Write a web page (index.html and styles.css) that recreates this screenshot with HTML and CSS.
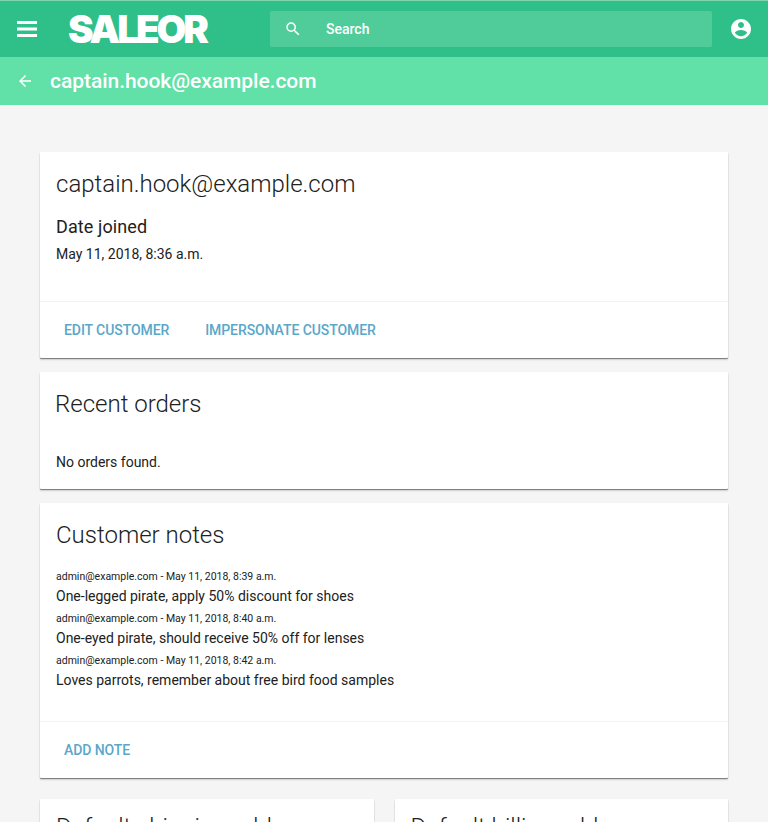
FILE: index.html
```html
<!DOCTYPE html>
<html lang="en">

<head>
	<meta charset="UTF-8">
	<title>captain.hook@example.com</title>
	<link rel="stylesheet" href="styles.css">
</head>

<body>
	<div class="page">
		<header class="topbar">
			<svg class="menu-icon" width="24" height="24" viewBox="0 0 24 24"><path d="M2 4h20v3H2zM2 10.5h20v3H2zM2 17h20v3H2z" fill="#fff"/></svg>
			<span class="logo">SALEOR</span>
			<div class="search">
				<svg width="18" height="18" viewBox="0 0 24 24"><path d="M15.5 14h-.79l-.28-.27A6.471 6.471 0 0 0 16 9.5 6.5 6.5 0 1 0 9.5 16c1.61 0 3.09-.59 4.23-1.57l.27.28v.79l5 4.99L20.49 19l-4.99-5zm-6 0C7.01 14 5 11.99 5 9.5S7.01 5 9.5 5 14 7.01 14 9.5 11.99 14 9.5 14z" fill="#fff"/></svg>
				<span class="search-label">Search</span>
			</div>
			<svg class="account-icon" width="24" height="24" viewBox="0 0 24 24"><path d="M12 2C6.48 2 2 6.48 2 12s4.48 10 10 10 10-4.48 10-10S17.52 2 12 2zm0 3c1.66 0 3 1.34 3 3s-1.34 3-3 3-3-1.34-3-3 1.34-3 3-3zm0 14.2c-2.5 0-4.71-1.28-6-3.22.03-1.99 4-3.08 6-3.08 1.99 0 5.97 1.09 6 3.08-1.29 1.94-3.5 3.22-6 3.22z" fill="#fff"/></svg>
		</header>
		<div class="subbar">
			<svg width="18" height="18" viewBox="0 0 24 24"><path d="M20 11H7.8l5.6-5.6L12 4l-8 8 8 8 1.4-1.4L7.8 13H20z" fill="#fff"/></svg>
			<h1>captain.hook@example.com</h1>
		</div>
		<main class="content">
			<section class="card card-customer">
				<div class="card-body">
					<h2 class="card-title">captain.hook@example.com</h2>
					<h3 class="label">Date joined</h3>
					<p class="text">May 11, 2018, 8:36 a.m.</p>
				</div>
				<div class="card-actions">
					<a class="action">Edit customer</a>
					<a class="action">Impersonate customer</a>
				</div>
			</section>
			<section class="card card-orders">
				<h2 class="card-title">Recent orders</h2>
				<p class="text">No orders found.</p>
			</section>
			<section class="card card-notes">
				<div class="card-body">
					<h2 class="card-title">Customer notes</h2>
					<div class="note">
						<small>admin@example.com - May 11, 2018, 8:39 a.m.</small>
						<p class="text">One-legged pirate, apply 50% discount for shoes</p>
					</div>
					<div class="note">
						<small>admin@example.com - May 11, 2018, 8:40 a.m.</small>
						<p class="text">One-eyed pirate, should receive 50% off for lenses</p>
					</div>
					<div class="note">
						<small>admin@example.com - May 11, 2018, 8:42 a.m.</small>
						<p class="text">Loves parrots, remember about free bird food samples</p>
					</div>
				</div>
				<div class="card-actions">
					<a class="action">Add note</a>
				</div>
			</section>
			<div class="address-row">
				<section class="card card-address">
					<h2 class="card-title">Default shipping address</h2>
				</section>
				<section class="card card-address">
					<h2 class="card-title">Default billing address</h2>
				</section>
			</div>
		</main>
	</div>
</body>

</html>
```

FILE: styles.css
```css
html,
body {
	height: 100%;
	margin: 0;
	overflow: hidden;
	background-color: #fff;
}

body {
	font-family: Roboto, sans-serif;
	color: #212121;
}

h1,
h2,
h3,
p {
	margin: 0;
}

.page {
	width: 768px;
	height: 822px;
	overflow: hidden;
	background-color: #f5f5f5;
}

.topbar {
	display: flex;
	align-items: center;
	height: 56px;
	border-top: 1px solid #7fd6ad;
	background-color: #2fc08a;
}

.menu-icon {
	margin-left: 15px;
	flex-shrink: 0;
}

.logo {
	width: 202px;
	margin-left: 29px;
	font-family: Inter, sans-serif;
	font-size: 38.5px;
	font-weight: 900;
	letter-spacing: -3px;
	color: #fff;
	flex-shrink: 0;
}

.search {
	display: flex;
	align-items: center;
	width: 442px;
	height: 36px;
	margin-right: 17px;
	padding-left: 14px;
	box-sizing: border-box;
	border-radius: 2px;
	background-color: #50cc9b;
	color: #fff;
	flex-shrink: 0;
}

.search-label {
	margin-left: 24px;
	font-size: 14px;
	font-weight: 500;
}

.account-icon {
	flex-shrink: 0;
}

.subbar {
	display: flex;
	align-items: center;
	height: 48px;
	padding-left: 16px;
	background-color: #61e0a8;
	color: #fff;
}

.subbar h1 {
	margin-left: 16px;
	font-size: 21px;
	font-weight: 500;
	letter-spacing: -0.04px;
}

.content {
	display: flex;
	flex-direction: column;
	gap: 14px;
	padding: 47px 40px 0;
}

.card {
	border-radius: 1px;
	background-color: #fff;
	box-shadow: 0 1px 1px rgba(0, 0, 0, 0.45), 0 2px 2px rgba(0, 0, 0, 0.12);
}

.card-title {
	font-size: 24px;
	font-weight: 300;
	line-height: 32px;
}

.card-customer .card-body {
	height: 150px;
	padding: 16px 16px 0;
	box-sizing: border-box;
	border-bottom: 1px solid #f2f2f2;
}

.label {
	margin-top: 15px;
	font-size: 18px;
	font-weight: 400;
	line-height: 24px;
	letter-spacing: 0.1px;
}

.text {
	font-size: 14px;
	line-height: 20px;
}

.card-customer .text {
	margin-top: 5px;
}

.card-actions {
	display: flex;
	gap: 36px;
	height: 56px;
	padding-left: 24px;
	align-items: center;
}

.action {
	font-size: 14px;
	font-weight: 500;
	letter-spacing: -0.08px;
	color: #5aa7c9;
	text-transform: uppercase;
}

.card-orders {
	height: 117px;
	padding: 16px 15px 0;
	box-sizing: border-box;
}

.card-orders .text {
	margin: 32px 0 0 1px;
}

.card-notes .card-body {
	height: 219px;
	padding: 16px 16px 0;
	box-sizing: border-box;
	border-bottom: 1px solid #f2f2f2;
}

.note {
	padding: 2px 0;
}

.note small {
	display: block;
	font-size: 10.5px;
	line-height: 18px;
}

.card-notes .note:first-of-type {
	margin-top: 15px;
}

.address-row {
	display: flex;
	gap: 21px;
	margin-top: 7px;
}

.card-address {
	width: 334px;
	height: 100px;
	padding: 12px 16px;
	box-sizing: border-box;
}
```
